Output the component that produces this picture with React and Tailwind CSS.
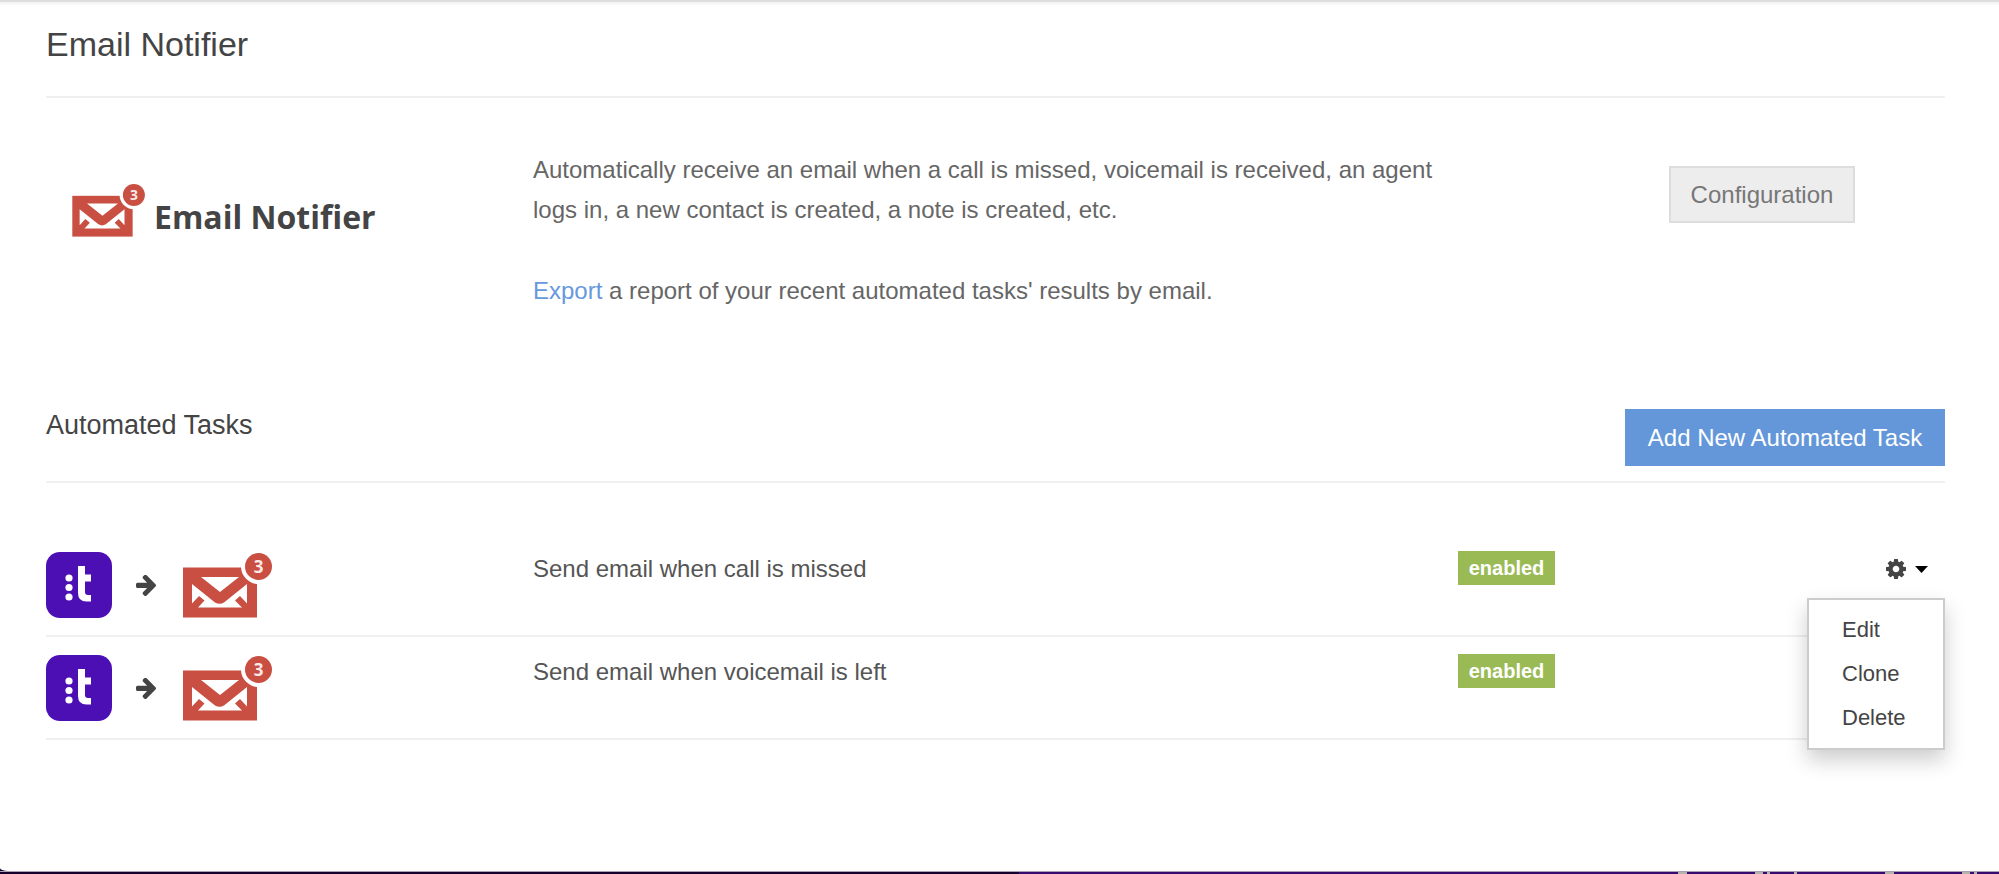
import React from "react";

function MailIcon({ className }) {
  return (
    <svg viewBox="0 0 90 65" className={className} role="img" aria-label="Email Notifier">
      <rect x="0" y="14.500" width="74" height="50" fill="#c94f42" />
      <path d="M18 24H56L37 39Z" fill="#fff" />
      <path
        d="M9 31L32 49.500Q36.500 52 41 49.500L64 31V50.500L57 43L52 47.500L59 54.500H15L21.500 47.500L16 43L9 50.500Z"
        fill="#fff"
      />
      <circle cx="75.500" cy="13.500" r="17.500" fill="#fff" />
      <circle cx="75.500" cy="13.500" r="13.500" fill="#c94f42" />
      <text x="75.500" y="19.500" textAnchor="middle" fontSize="17" fontWeight="700" fill="#fbe9e7" fontFamily="'Open Sans', sans-serif">3</text>
    </svg>
  );
}

function AppTile() {
  return (
    <svg viewBox="0 0 66 66" className="size-[66px]" role="img" aria-label="Talkdesk">
      <rect width="66" height="66" rx="14" fill="#4c0fb4" />
      <circle cx="23" cy="26" r="3.600" fill="#fff" />
      <circle cx="23" cy="35.500" r="3.600" fill="#fff" />
      <circle cx="23" cy="45" r="3.600" fill="#fff" />
      <path d="M32 14H39V22.500H45V29.500H39V40Q39 43 42 43H45V49.500H40.500Q32 49.500 32 41Z" fill="#fff" />
    </svg>
  );
}

function ArrowIcon() {
  return (
    <svg viewBox="0 203 1472 1536" className="mr-[27px] ml-6 h-[21px] w-5" fill="#444" aria-hidden="true">
      <path d="M1472 960q0 54-37 91l-651 651q-39 37-91 37-51 0-90-37l-75-75q-38-38-38-91t38-91l293-293h-704q-52 0-84.500-37.500t-32.500-90.500v-128q0-53 32.500-90.500t84.500-37.500h704l-293-294q-38-36-38-90t38-90l75-75q38-38 90-38 53 0 91 38l651 651q37 35 37 90z" />
    </svg>
  );
}

function CogIcon() {
  return (
    <svg viewBox="0 128 1536 1536" className="size-5" fill="#444" aria-hidden="true">
      <path d="M1024 896q0-106-75-181t-181-75-181 75-75 181 75 181 181 75 181-75 75-181zm512-109v222q0 12-8 23t-20 13l-185 28q-19 54-39 91 35 50 107 138 10 12 10 25t-9 23q-27 37-99 108t-94 71q-12 0-26-9l-138-108q-44 23-91 38-16 136-29 186-7 28-36 28h-222q-14 0-24.500-8.500t-11.500-21.500l-28-184q-49-16-90-37l-141 107q-10 9-25 9-14 0-25-11-126-114-165-168-7-10-7-23 0-12 8-23 15-21 51-66.500t54-70.500q-27-50-41-99l-183-27q-13-2-21-12.500t-8-23.500v-222q0-12 8-23t19-13l186-28q14-46 39-92-40-57-107-138-10-12-10-24 0-10 9-23 26-36 98.500-107.500t94.500-71.500q13 0 26 10l138 107q44-23 91-38 16-136 29-186 7-28 36-28h222q14 0 24.500 8.500t11.500 21.500l28 184q49 16 90 37l142-107q9-9 24-9 13 0 25 10 129 119 165 170 7 8 7 22 0 12-8 23-15 21-51 66.500t-54 70.500q26 50 41 98l183 28q13 2 21 12.500t8 23.500z" />
    </svg>
  );
}

function ActionsMenu() {
  return (
    <div className="relative flex justify-end pr-[17px]">
      <button type="button" aria-label="Task actions" aria-expanded="true" className="flex h-9 items-center gap-[9px]">
        <CogIcon />
        <svg viewBox="0 0 13 7" className="h-[7px] w-[13px]" aria-hidden="true">
          <path d="M0 0H13L6.500 7Z" fill="#000" />
        </svg>
      </button>
      <ul className="absolute top-[47px] right-0 z-10 w-[138px] border-2 border-[#ccc] bg-white pt-[7px] pb-[9px] shadow-[0_10px_20px_rgba(0,0,0,0.2)]">
        {["Edit", "Clone", "Delete"].map((label) => (
          <li key={label}>
            <button type="button" className="h-11 w-full pl-[33px] text-left text-[22px] text-[#444]">
              {label}
            </button>
          </li>
        ))}
      </ul>
    </div>
  );
}

function TaskRow({ name, menu }) {
  return (
    <li className="grid grid-cols-[487px_1fr_97px_390px] items-start border-b-2 border-[#f0f0f0] py-[17px]">
      <div className="flex items-center pt-px">
        <AppTile />
        <ArrowIcon />
        <MailIcon className="h-[65px] w-[90px]" />
      </div>
      <p className="text-2xl leading-9 text-[#555]">{name}</p>
      <span className="h-[34px] bg-[#9aba55] text-center text-xl leading-[34px] font-bold text-white">enabled</span>
      {menu && <ActionsMenu />}
    </li>
  );
}

function BottomEdge() {
  return (
    <div className="flex h-[3px] shrink-0 border-t border-[#aaa0b4]">
      <div className="w-[51%] bg-[#14002b]" />
      <div className="flex grow justify-end bg-[#370a70]">
        <svg viewBox="0 0 330 2" className="h-[2px] w-[330px]" fill="#b5b3ac" aria-hidden="true">
          <path d="M9 0h9v2h-9z M86 0h8v2h-8z M98 0h3v2h-3z M125 0h3v2h-3z M216 0h9v2h-9z M293 0h8v2h-8z M305 0h3v2h-3z" />
        </svg>
      </div>
    </div>
  );
}

export default function App() {
  return (
    <div className="flex min-h-screen flex-col bg-[#14002b] font-['Liberation_Sans',Arial,sans-serif]">
      <main className="grow rounded-bl-[8px_3px] border-t-2 border-[#dedede] bg-white pr-[54px] pl-[46px] shadow-[inset_0_5px_3px_-3px_rgba(0,0,0,0.06)]">
        <h1 className="border-b-2 border-[#f0f0f0] pt-[22px] pb-[32px] text-[34px] leading-10 text-[#444]">Email Notifier</h1>

        <section className="grid grid-cols-[487px_1fr_276px] items-start pt-[52px]">
          <div className="flex items-end gap-2 pt-[34px] pl-[26px]">
            <MailIcon className="h-[53px] w-[74px]" />
            <span className="font-['Open_Sans',sans-serif] text-[32px] leading-10 font-bold text-[#444]">Email Notifier</span>
          </div>
          <div className="max-w-[930px] text-2xl leading-10 text-[#666]">
            <p>
              Automatically receive an email when a call is missed, voicemail is received, an agent logs in, a new contact is created, a note is
              created, etc.
            </p>
            <p className="mt-[41px]">
              <a href="#export" className="text-[#6699dd]">Export</a> a report of your recent automated tasks' results by email.
            </p>
          </div>
          <button type="button" className="mt-4 h-[57px] w-[186px] border-2 border-[#ddd] bg-[#ededed] text-2xl text-[#777]">
            Configuration
          </button>
        </section>

        <section className="pt-[98px]">
          <div className="flex items-start justify-between border-b-2 border-[#f0f0f0] pb-[15px]">
            <h2 className="text-[27px] leading-8 text-[#444]">Automated Tasks</h2>
            <button type="button" className="h-[57px] w-[320px] bg-[#6397da] text-2xl text-white">
              Add New Automated Task
            </button>
          </div>
          <ul className="pt-[51px]">
            <TaskRow name="Send email when call is missed" menu />
            <TaskRow name="Send email when voicemail is left" />
          </ul>
        </section>
      </main>
      <BottomEdge />
    </div>
  );
}
